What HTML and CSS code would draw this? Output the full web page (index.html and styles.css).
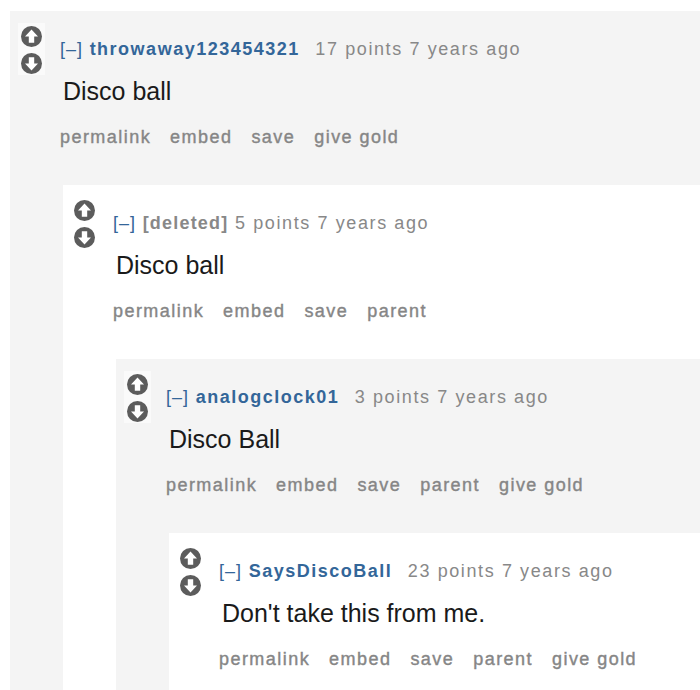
FILE: index.html
```html
<!DOCTYPE html>
<html lang="en">
<head>
<meta charset="utf-8">
<title>Comments</title>
<link rel="stylesheet" href="styles.css">
</head>
<body>
<div class="thread">
  <div class="comment odd">
    <div class="midcol">
      <div class="arrows">
        <svg class="arrow" viewBox="0 0 21 21" width="21" height="21"><circle cx="10.5" cy="10.5" r="10.5" fill="#5c5c5c"/><path d="M10.5 3.6 L17 10.4 H13.2 V16.8 H7.8 V10.4 H4 Z" fill="#fff"/></svg>
        <svg class="arrow" viewBox="0 0 21 21" width="21" height="21"><circle cx="10.5" cy="10.5" r="10.5" fill="#5c5c5c"/><path d="M10.5 17.4 L17 10.6 H13.2 V4.2 H7.8 V10.6 H4 Z" fill="#fff"/></svg>
      </div>
    </div>
    <div class="entry">
      <p class="tagline"><a class="expand">[–]</a> <a class="author">throwaway123454321</a><span class="userattrs"></span> <span class="score">17 points</span> <time>7 years ago</time></p>
      <div class="md"><p>Disco ball</p></div>
      <ul class="buttons"><li>permalink</li><li>embed</li><li>save</li><li>give gold</li></ul>

      <div class="comment even">
        <div class="midcol">
          <div class="arrows">
            <svg class="arrow" viewBox="0 0 21 21" width="21" height="21"><circle cx="10.5" cy="10.5" r="10.5" fill="#5c5c5c"/><path d="M10.5 3.6 L17 10.4 H13.2 V16.8 H7.8 V10.4 H4 Z" fill="#fff"/></svg>
            <svg class="arrow" viewBox="0 0 21 21" width="21" height="21"><circle cx="10.5" cy="10.5" r="10.5" fill="#5c5c5c"/><path d="M10.5 17.4 L17 10.6 H13.2 V4.2 H7.8 V10.6 H4 Z" fill="#fff"/></svg>
          </div>
        </div>
        <div class="entry">
          <p class="tagline"><a class="expand">[–]</a> <span class="deleted">[deleted]</span> <span class="score">5 points</span> <time>7 years ago</time></p>
          <div class="md"><p>Disco ball</p></div>
          <ul class="buttons"><li>permalink</li><li>embed</li><li>save</li><li>parent</li></ul>

          <div class="comment odd">
            <div class="midcol">
              <div class="arrows">
                <svg class="arrow" viewBox="0 0 21 21" width="21" height="21"><circle cx="10.5" cy="10.5" r="10.5" fill="#5c5c5c"/><path d="M10.5 3.6 L17 10.4 H13.2 V16.8 H7.8 V10.4 H4 Z" fill="#fff"/></svg>
                <svg class="arrow" viewBox="0 0 21 21" width="21" height="21"><circle cx="10.5" cy="10.5" r="10.5" fill="#5c5c5c"/><path d="M10.5 17.4 L17 10.6 H13.2 V4.2 H7.8 V10.6 H4 Z" fill="#fff"/></svg>
              </div>
            </div>
            <div class="entry">
              <p class="tagline"><a class="expand">[–]</a> <a class="author">analogclock01</a><span class="userattrs"></span> <span class="score">3 points</span> <time>7 years ago</time></p>
              <div class="md"><p>Disco Ball</p></div>
              <ul class="buttons"><li>permalink</li><li>embed</li><li>save</li><li>parent</li><li>give gold</li></ul>

              <div class="comment even">
                <div class="midcol">
                  <div class="arrows">
                    <svg class="arrow" viewBox="0 0 21 21" width="21" height="21"><circle cx="10.5" cy="10.5" r="10.5" fill="#5c5c5c"/><path d="M10.5 3.6 L17 10.4 H13.2 V16.8 H7.8 V10.4 H4 Z" fill="#fff"/></svg>
                    <svg class="arrow" viewBox="0 0 21 21" width="21" height="21"><circle cx="10.5" cy="10.5" r="10.5" fill="#5c5c5c"/><path d="M10.5 17.4 L17 10.6 H13.2 V4.2 H7.8 V10.6 H4 Z" fill="#fff"/></svg>
                  </div>
                </div>
                <div class="entry">
                  <p class="tagline"><a class="expand">[–]</a> <a class="author">SaysDiscoBall</a><span class="userattrs"></span> <span class="score">23 points</span> <time>7 years ago</time></p>
                  <div class="md"><p>Don't take this from me.</p></div>
                  <ul class="buttons"><li>permalink</li><li>embed</li><li>save</li><li>parent</li><li>give gold</li></ul>
                </div>
              </div>

            </div>
          </div>

        </div>
      </div>

    </div>
  </div>
</div>
</body>
</html>
```

FILE: styles.css
```css
html, body {
  margin: 0;
  padding: 0;
  overflow: hidden;
  background: #fff;
}

body {
  padding: 11px 0 0 10px;
  font-family: "Liberation Sans", Arial, Helvetica, sans-serif;
}

.thread {
  width: 1100px;
}

.comment {
  display: flex;
  align-items: flex-start;
  padding-bottom: 60px;
}

.comment.odd {
  background: #f4f4f4;
}

.comment.even {
  background: #fff;
}

.midcol {
  width: 50px;
  flex-shrink: 0;
  padding: 12px 0 0 8px;
  box-sizing: border-box;
}

.arrows {
  width: 27px;
  padding: 3px 0 1px 3px;
  box-sizing: border-box;
  display: flex;
  flex-direction: column;
  gap: 6px;
  background: rgba(255, 255, 255, 0.55);
}

.arrow {
  display: block;
}

.entry {
  flex: 1;
  min-width: 0;
}

.tagline {
  margin: 27px 0 0;
  font-size: 18px;
  line-height: 22px;
  letter-spacing: 1.6px;
  color: #888;
  white-space: nowrap;
}

.expand {
  color: #369;
  letter-spacing: 1px;
}

.author {
  color: #336699;
  font-weight: bold;
  letter-spacing: 1.5px;
}

.deleted {
  color: #888;
  font-weight: bold;
  letter-spacing: 1.2px;
}

.userattrs {
  display: inline-block;
  width: 9px;
}

.md {
  margin-top: 16px;
  padding-left: 3px;
}

.md p {
  margin: 0;
  font-size: 25px;
  line-height: 30px;
  color: #1a1a1a;
}

.buttons {
  list-style: none;
  margin: 20px 0 0;
  padding: 0;
  display: flex;
  gap: 19px;
  font-size: 18px;
  line-height: 22px;
  letter-spacing: 1.45px;
  color: #868686;
  -webkit-text-stroke: 0.4px #868686;
  white-space: nowrap;
}

.comment .comment {
  margin: 37px 0 0 3px;
}
```
